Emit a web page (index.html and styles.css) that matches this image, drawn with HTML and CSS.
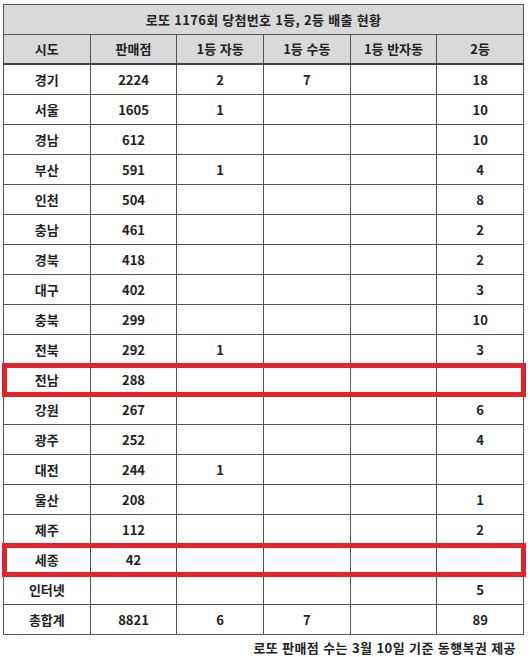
FILE: index.html
```html
<!DOCTYPE html>
<html lang="ko">
<head>
<meta charset="utf-8">
<link rel="stylesheet" href="styles.css">
</head>
<body>
<div class="wrap">
<table class="lotto">
<colgroup><col><col><col><col><col><col></colgroup>
<thead>
<tr class="title"><th colspan="6">로또 1176회 당첨번호 1등, 2등 배출 현황</th></tr>
<tr class="head"><th>시도</th><th>판매점</th><th>1등 자동</th><th>1등 수동</th><th>1등 반자동</th><th>2등</th></tr>
</thead>
<tbody>
<tr><td>경기</td><td>2224</td><td>2</td><td>7</td><td></td><td>18</td></tr>
<tr><td>서울</td><td>1605</td><td>1</td><td></td><td></td><td>10</td></tr>
<tr><td>경남</td><td>612</td><td></td><td></td><td></td><td>10</td></tr>
<tr><td>부산</td><td>591</td><td>1</td><td></td><td></td><td>4</td></tr>
<tr><td>인천</td><td>504</td><td></td><td></td><td></td><td>8</td></tr>
<tr><td>충남</td><td>461</td><td></td><td></td><td></td><td>2</td></tr>
<tr><td>경북</td><td>418</td><td></td><td></td><td></td><td>2</td></tr>
<tr><td>대구</td><td>402</td><td></td><td></td><td></td><td>3</td></tr>
<tr><td>충북</td><td>299</td><td></td><td></td><td></td><td>10</td></tr>
<tr><td>전북</td><td>292</td><td>1</td><td></td><td></td><td>3</td></tr>
<tr class="hl"><td>전남</td><td>288</td><td></td><td></td><td></td><td></td></tr>
<tr><td>강원</td><td>267</td><td></td><td></td><td></td><td>6</td></tr>
<tr><td>광주</td><td>252</td><td></td><td></td><td></td><td>4</td></tr>
<tr><td>대전</td><td>244</td><td>1</td><td></td><td></td><td></td></tr>
<tr><td>울산</td><td>208</td><td></td><td></td><td></td><td>1</td></tr>
<tr><td>제주</td><td>112</td><td></td><td></td><td></td><td>2</td></tr>
<tr class="hl"><td>세종</td><td>42</td><td></td><td></td><td></td><td></td></tr>
<tr><td>인터넷</td><td></td><td></td><td></td><td></td><td>5</td></tr>
<tr><td>총합계</td><td>8821</td><td>6</td><td>7</td><td></td><td>89</td></tr>
</tbody>
</table>
<p class="note">로또 판매점 수는 3월 10일 기준 동행복권 제공</p>
</div>
</body>
</html>
```

FILE: styles.css
```css
html, body {
  margin: 0;
  padding: 0;
  background: #fff;
}
body {
  font-family: "Noto Sans CJK KR", "Noto Sans", sans-serif;
  color: #222;
}
.wrap {
  padding: 4px 6px 0 3px;
}
.lotto {
  width: 521px;
  border-collapse: collapse;
  table-layout: fixed;
  font-size: 13px;
  font-weight: 700;
}
.lotto th,
.lotto td {
  border: 1px solid #555;
  text-align: center;
  padding: 0;
  line-height: 16px;
}
.lotto .title th {
  height: 29px;
  background: #d9d9d9;
  font-weight: 700;
  letter-spacing: 0.3px;
}
.lotto .head th {
  height: 28px;
  background: #d9d9d9;
  font-weight: 700;
  border-bottom: 2px solid #444;
}
.lotto td {
  height: 29px;
}
.lotto tr.hl {
  outline: 5px solid #e3222b;
  outline-offset: -3px;
}
.note {
  margin: 5px 8px 0 0;
  text-align: right;
  font-size: 13px;
  font-weight: 700;
  letter-spacing: 0.4px;
  color: #222;
  line-height: 16px;
}
```
